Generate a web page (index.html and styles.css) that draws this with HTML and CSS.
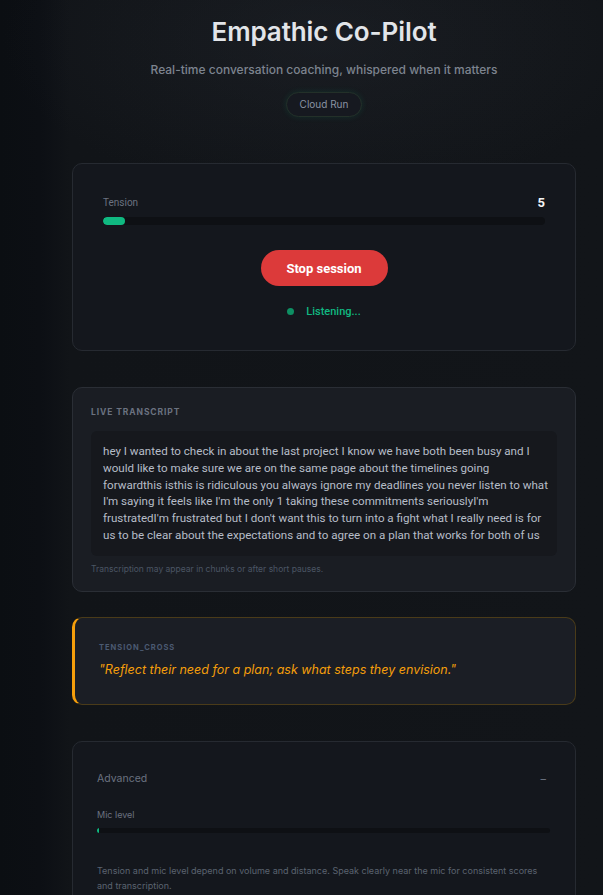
FILE: index.html
```html
<!DOCTYPE html>
<html lang="en">
<head>
<meta charset="utf-8">
<title>Empathic Co-Pilot</title>
<link rel="stylesheet" href="styles.css">
</head>
<body>
<main class="page">
  <header class="hero">
    <h1 class="title">Empathic Co-Pilot</h1>
    <p class="subtitle">Real-time conversation coaching, whispered when it matters</p>
    <span class="badge">Cloud Run</span>
  </header>

  <section class="card card-session">
    <div class="meter-head">
      <span class="meter-label">Tension</span>
      <span class="meter-value">5</span>
    </div>
    <div class="meter"><div class="meter-fill" style="width:5%"></div></div>
    <div class="actions">
      <button class="btn-stop">Stop session</button>
    </div>
    <div class="status">
      <span class="status-dot"></span>
      <span class="status-text">Listening...</span>
    </div>
  </section>

  <section class="card card-transcript">
    <h2 class="section-label">Live transcript</h2>
    <div class="transcript">hey I wanted to check in about the last project I know we have both been busy and I would like to make sure we are on the same page about the timelines going forwardthis isthis is ridiculous you always ignore my deadlines you never listen to what I'm saying it feels like I'm the only 1 taking these commitments seriouslyI'm frustratedI'm frustrated but I don't want this to turn into a fight what I really need is for us to be clear about the expectations and to agree on a plan that works for both of us</div>
    <p class="footnote">Transcription may appear in chunks or after short pauses.</p>
  </section>

  <section class="card card-tip">
    <div class="tip-label">TENSION_CROSS</div>
    <p class="tip-quote">"Reflect their need for a plan; ask what steps they envision."</p>
  </section>

  <section class="card card-advanced">
    <div class="adv-head">
      <span class="adv-title">Advanced</span>
      <span class="adv-toggle">–</span>
    </div>
    <div class="mic-label">Mic level</div>
    <div class="mic-meter"><div class="mic-fill" style="width:0.4%"></div></div>
    <p class="adv-note">Tension and mic level depend on volume and distance. Speak clearly near the mic for consistent scores and transcription.</p>
  </section>
</main>
</body>
</html>
```

FILE: styles.css
```css
* { box-sizing: border-box; }

html, body {
  margin: 0;
  padding: 0;
}

body {
  min-height: 895px;
  font-family: "Inter", "Liberation Sans", sans-serif;
  color: #d1d5db;
  background:
    radial-gradient(ellipse 320px 160px at 323px 40px, rgba(40, 44, 52, 0.35), rgba(40, 44, 52, 0) 100%),
    linear-gradient(90deg, #0b0e12 0, #0c0f14 40px, #111418 70px, #121519 100%);
}

.page {
  margin: 0 27px 0 72px;
  padding-bottom: 40px;
}

.hero {
  display: flex;
  flex-direction: column;
  align-items: center;
  padding-top: 14px;
}

.title {
  margin: 0;
  font-size: 26px;
  line-height: 36px;
  font-weight: 600;
  color: #e2e5e9;
  letter-spacing: -0.1px;
}

.subtitle {
  margin: 12px 0 0;
  font-size: 12px;
  line-height: 16px;
  color: #7d848f;
  font-weight: 500;
}

.badge {
  margin-top: 14px;
  font-size: 10px;
  line-height: 13px;
  padding: 5px 13px;
  border: 1px solid #233029;
  border-radius: 999px;
  color: #8a93a3;
  background: #161920;
  box-shadow: 0 0 6px rgba(16, 185, 129, 0.14);
}

.card {
  border: 1px solid #262a31;
  border-radius: 10px;
  background: #14171d;
}

.card-session {
  margin-top: 46px;
  padding: 30px 30px 32px;
  font-family: "Roboto", "Liberation Sans", sans-serif;
}

.meter-head {
  display: flex;
  justify-content: space-between;
  align-items: center;
  height: 16px;
}

.meter-label {
  font-size: 10px;
  color: #6b7280;
}

.meter-value {
  font-size: 13px;
  font-weight: 700;
  color: #f3f4f6;
}

.meter {
  margin-top: 7px;
  height: 8px;
  border-radius: 4px;
  background: #0e1014;
  overflow: hidden;
}

.meter-fill {
  height: 100%;
  border-radius: 4px;
  background: #10b981;
}

.actions {
  display: flex;
  justify-content: center;
  margin-top: 25px;
}

.btn-stop {
  font-family: "Roboto", "Liberation Sans", sans-serif;
  font-size: 13px;
  font-weight: 700;
  color: #ffffff;
  background: #dc3a3a;
  border: none;
  border-radius: 999px;
  height: 36px;
  width: 127px;
  padding: 0;
}

.status {
  display: flex;
  justify-content: center;
  align-items: center;
  gap: 12px;
  margin-top: 18px;
  height: 14px;
}

.status-dot {
  width: 7px;
  height: 7px;
  border-radius: 50%;
  background: #0e8f63;
}

.status-text {
  font-size: 11px;
  font-weight: 500;
  color: #10b981;
}

.card-transcript {
  margin-top: 36px;
  padding: 18px 18px 16px;
  background: #1a1d23;
  border-color: #2a2e35;
}

.section-label {
  margin: 0;
  font-size: 8.5px;
  line-height: 12px;
  font-weight: 700;
  letter-spacing: 0.9px;
  text-transform: uppercase;
  color: #6b7280;
}

.transcript {
  margin-top: 13px;
  padding: 12px 8px 12px 12px;
  background: #16181d;
  border-radius: 6px;
  font-family: "Roboto", "Liberation Sans", sans-serif;
  font-size: 11.6px;
  line-height: 16.8px;
  color: #b6bdc8;
}

.footnote {
  margin: 7px 0 0;
  font-size: 8.5px;
  line-height: 12px;
  color: #4b5563;
}

.card-tip {
  margin-top: 25px;
  padding: 25px 24px 25px 24px;
  background: #1b1e25;
  border-color: #4a3b19;
  border-left: 3px solid #f59e0b;
}

.tip-label {
  font-size: 7.5px;
  line-height: 10px;
  font-weight: 700;
  letter-spacing: 1px;
  color: #4b5a72;
}

.tip-quote {
  margin: 8px 0 0;
  font-size: 12.5px;
  line-height: 18px;
  font-style: italic;
  color: #f59e0b;
}

.card-advanced {
  margin-top: 36px;
  padding: 30px 25px 30px 24px;
}

.adv-head {
  display: flex;
  justify-content: space-between;
  align-items: center;
  height: 14px;
  padding-right: 4px;
}

.adv-title {
  font-size: 10.5px;
  color: #6b7280;
}

.adv-toggle {
  font-size: 11px;
  color: #6b7280;
}

.mic-label {
  margin-top: 22px;
  font-size: 9px;
  line-height: 14px;
  color: #6b7280;
}

.mic-meter {
  margin-top: 6px;
  height: 5px;
  border-radius: 3px;
  background: #0e1014;
  overflow: hidden;
}

.mic-fill {
  height: 100%;
  min-width: 1px;
  background: #10b981;
}

.adv-note {
  margin: 30px 0 0;
  font-size: 9px;
  line-height: 15px;
  color: #5b6370;
}
```
